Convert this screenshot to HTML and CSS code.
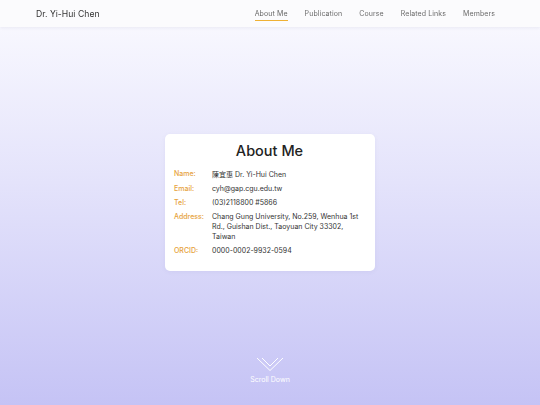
FILE: index.html
```html
<!DOCTYPE html>
<html lang="en">
<head>
<meta charset="utf-8">
<title>Dr. Yi-Hui Chen</title>
<link rel="stylesheet" href="styles.css">
</head>
<body>
<header class="topbar">
  <div class="brand">Dr. Yi-Hui Chen</div>
  <nav class="nav">
    <a class="nav-link active">About Me</a>
    <a class="nav-link">Publication</a>
    <a class="nav-link">Course</a>
    <a class="nav-link">Related Links</a>
    <a class="nav-link">Members</a>
  </nav>
</header>
<section class="hero">
  <div class="card">
    <h1 class="card-title">About Me</h1>
    <dl class="info">
      <dt>Name:</dt><dd><span class="cjk">陳宜惠</span> Dr. Yi-Hui Chen</dd>
      <dt>Email:</dt><dd>cyh@gap.cgu.edu.tw</dd>
      <dt>Tel:</dt><dd>(03)2118800 #5866</dd>
      <dt>Address:</dt><dd>Chang Gung University, No.259, Wenhua 1st Rd., Guishan Dist., Taoyuan City 33302, Taiwan</dd>
      <dt>ORCID:</dt><dd>0000-0002-9932-0594</dd>
    </dl>
  </div>
  <div class="scroll">
    <svg class="scroll-icon" width="28" height="16" viewBox="0 0 28 16">
      <polyline points="1,1 14,13.5 27,1" fill="none" stroke="#ffffff" stroke-width="1"/>
      <polyline points="6,1 14,9 22,1" fill="none" stroke="#ffffff" stroke-width="1"/>
    </svg>
    <div class="scroll-text">Scroll Down</div>
  </div>
</section>
</body>
</html>
```
FILE: styles.css
```css
* { box-sizing: border-box; }
html, body { margin: 0; padding: 0; }
body {
  font-family: Inter, "Noto Sans", "Noto Sans CJK TC", sans-serif;
  color: #333;
  width: 540px;
  height: 405px;
  overflow: hidden;
}
.topbar {
  position: fixed;
  top: 0; left: 0; right: 0;
  height: 27px;
  display: flex;
  align-items: center;
  justify-content: space-between;
  padding: 0 45px 0 36px;
  background: #fbfbfd;
  box-shadow: 0 1px 3px rgba(60, 60, 120, 0.08);
  z-index: 2;
}
.brand {
  font-size: 8.6px;
  color: #333;
  letter-spacing: 0.05px;
}
.nav {
  display: flex;
  gap: 17px;
  align-items: center;
}
.nav-link {
  font-size: 7px;
  color: #6b6b6b;
  padding: 3px 0 2px;
  border-bottom: 1.2px solid transparent;
  letter-spacing: 0.1px;
}
.nav-link.active {
  border-bottom-color: #efb134;
  color: #666;
}
.hero {
  height: 405px;
  background: linear-gradient(180deg, #fbfbff 0%, #e4e3fb 45%, #c5c3f5 100%);
  display: grid;
  grid-template-rows: 1fr auto 1fr;
  justify-items: center;
}
.card {
  grid-row: 2;
  width: 210px;
  background: #ffffff;
  border-radius: 5px;
  padding: 7px 10px 15px 9px;
  box-shadow: 0 1px 4px rgba(100, 100, 160, 0.08);
}
.card-title {
  margin: 0 0 8px;
  text-align: center;
  font-size: 14.5px;
  font-weight: 500;
  color: #222;
  line-height: 20px;
}
.info {
  margin: 0;
  display: grid;
  grid-template-columns: 38px 148px;
  row-gap: 4px;
  font-size: 7px;
  line-height: 10px;
}
.info dt {
  color: #e6a23c;
  font-weight: 500;
}
.info dd {
  margin: 0;
  color: #333;
}
.cjk { font-family: "Noto Sans CJK TC", sans-serif; }
.scroll {
  grid-row: 3;
  align-self: end;
  display: flex;
  flex-direction: column;
  align-items: center;
  padding-bottom: 21px;
}
.scroll-icon { display: block; margin-bottom: 2px; }
.scroll-text {
  font-size: 7px;
  color: #ffffff;
}
```
